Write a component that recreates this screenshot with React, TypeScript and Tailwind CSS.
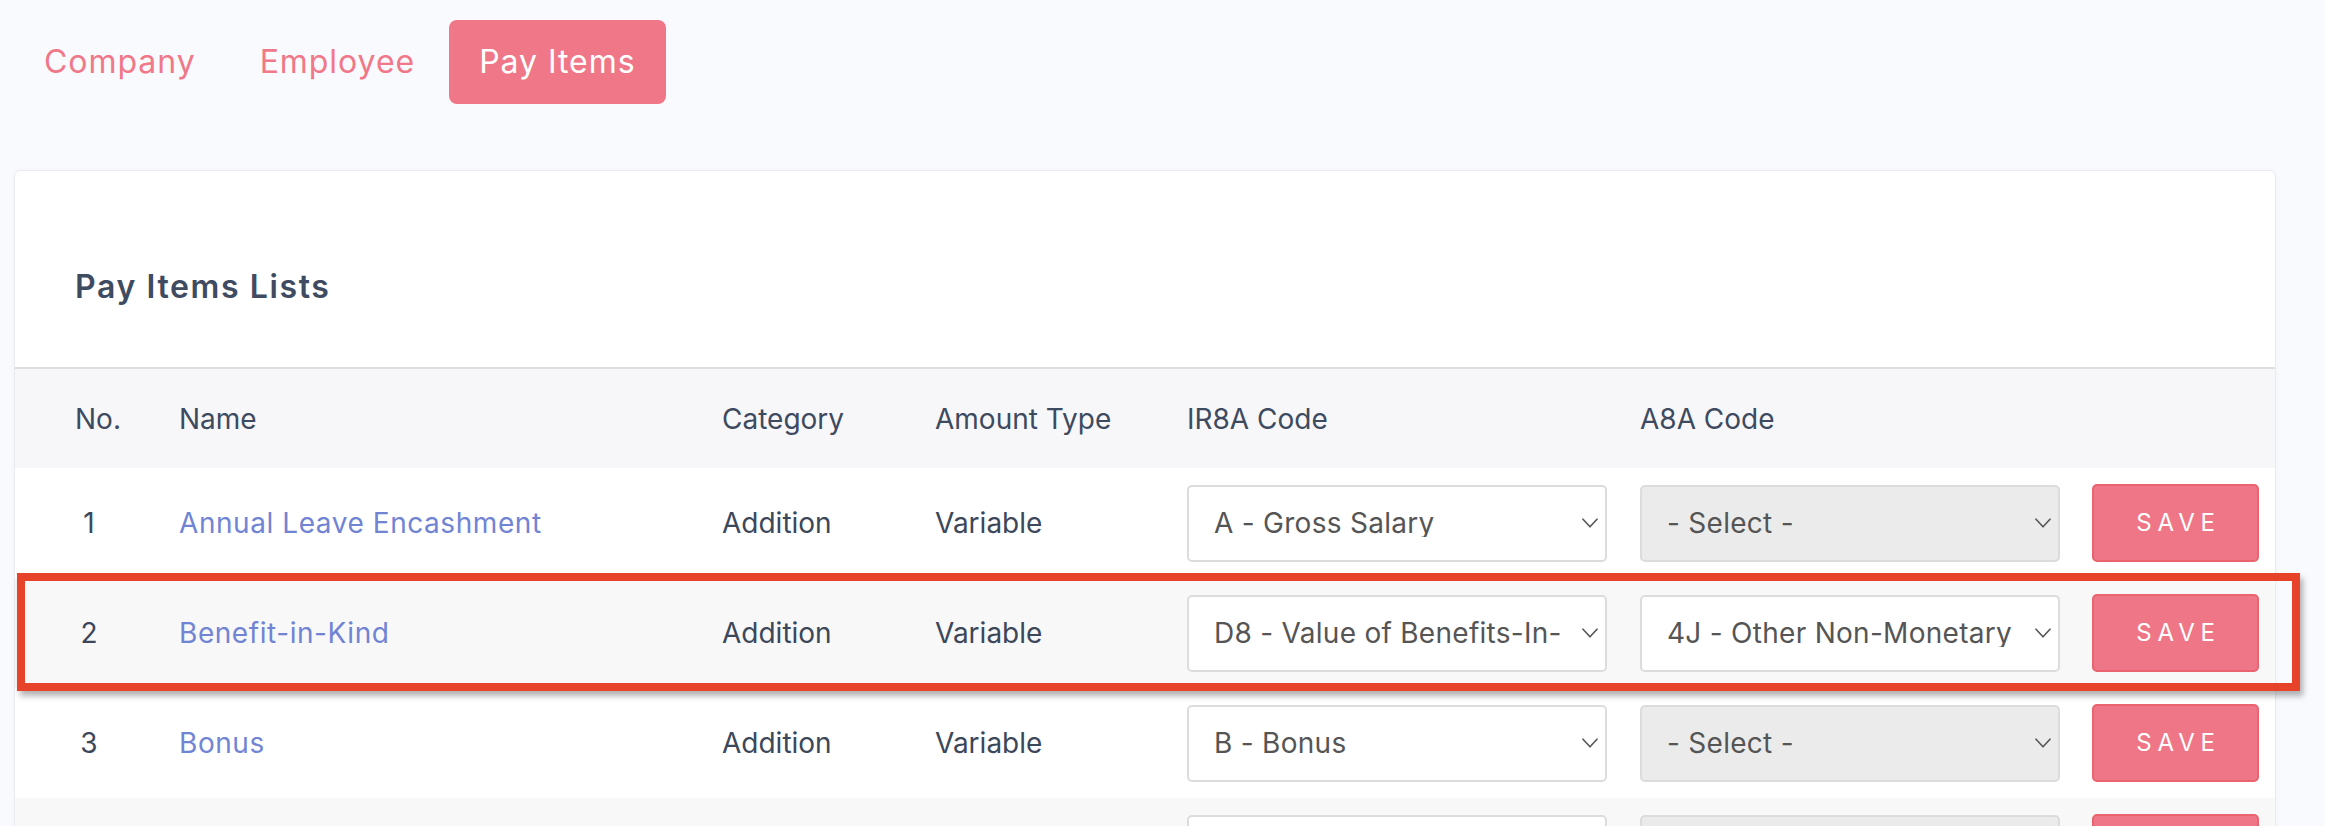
import React from "react";

type Row = {
  no: number;
  name: string;
  cat: string;
  amt: string;
  ir8a: string;
  a8a: string;
  a8aDisabled: boolean;
  striped: boolean;
};

const rows: Row[] = [
  { no: 1, name: "Annual Leave Encashment", cat: "Addition", amt: "Variable", ir8a: "A - Gross Salary", a8a: "- Select -", a8aDisabled: true, striped: false },
  { no: 2, name: "Benefit-in-Kind", cat: "Addition", amt: "Variable", ir8a: "D8 - Value of Benefits-In-Kind", a8a: "4J - Other Non-Monetary Awards", a8aDisabled: false, striped: true },
  { no: 3, name: "Bonus", cat: "Addition", amt: "Variable", ir8a: "B - Bonus", a8a: "- Select -", a8aDisabled: true, striped: false },
  { no: 4, name: "Commission", cat: "Addition", amt: "Variable", ir8a: "A - Gross Salary", a8a: "- Select -", a8aDisabled: true, striped: true },
];

function Chevron() {
  return (
    <svg width="16" height="10" viewBox="0 0 16 10" className="shrink-0">
      <path d="M1 1.2L8 8.8L15 1.2" fill="none" stroke="#555555" strokeWidth="1.6" strokeLinecap="round" strokeLinejoin="round" />
    </svg>
  );
}

function SelectBox({ value, disabled }: { value: string; disabled?: boolean }) {
  return (
    <div
      className={`flex h-[77px] w-[420px] items-center gap-[20px] rounded-[5px] border-2 border-[#dcdcdc] pl-[25px] pr-[7px] ${
        disabled ? "bg-[#ebebeb]" : "bg-white"
      }`}
    >
      <span className="min-w-0 flex-1 overflow-hidden whitespace-nowrap text-[28px] leading-none tracking-[0.01em] text-[#555555]">{value}</span>
      <Chevron />
    </div>
  );
}

const gridCols = "grid grid-cols-[104px_543px_213px_252px_453px_452px_167px] items-center pl-[60px] pr-[16px]";

export default function App() {
  return (
    <div
      className="relative min-h-[826px] overflow-hidden bg-[#f9fafe] pl-[14px] pr-[49px] pt-[20px]"
      style={{ fontFamily: "Inter, 'Open Sans', sans-serif" }}
    >
      {/* Tabs */}
      <div className="flex items-center gap-[4px]">
        <div className="flex h-[84px] items-center px-[30px] text-[32px] tracking-[0.03em] text-[#f07888]">Company</div>
        <div className="flex h-[84px] items-center px-[30px] text-[32px] tracking-[0.03em] text-[#f07888]">Employee</div>
        <div className="flex h-[84px] items-center rounded-[8px] bg-[#f07787] px-[30px] text-[32px] tracking-[0.03em] text-white">Pay Items</div>
      </div>

      {/* Card */}
      <div className="mt-[66px] rounded-[6px] border border-[#eaebf0] bg-white shadow-[0_0_6px_rgba(0,0,0,0.03)]">
        <div className="h-[198px] border-b-2 border-[#dedede] pl-[60px] pt-[98px]">
          <h2 className="text-[32px] font-semibold leading-[36px] tracking-[0.05em] text-[#3e4b61]">Pay Items Lists</h2>
        </div>

        <div className={`${gridCols} h-[99px] bg-[#f7f7f9] text-[28px] text-[#3d4a5f]`}>
          <div>No.</div>
          <div>Name</div>
          <div>Category</div>
          <div>Amount Type</div>
          <div>IR8A Code</div>
          <div>A8A Code</div>
          <div></div>
        </div>

        {rows.map((r) => (
          <div
            key={r.no}
            className={`${gridCols} h-[110px] text-[28px] text-[#3c475a] ${r.striped ? "bg-[#f8f8f8]" : "bg-white"}`}
          >
            <div className="w-[28px] text-center">{r.no}</div>
            <div className="tracking-[0.02em] text-[#7184d4]">{r.name}</div>
            <div>{r.cat}</div>
            <div>{r.amt}</div>
            <div>
              <SelectBox value={r.ir8a} />
            </div>
            <div>
              <SelectBox value={r.a8a} disabled={r.a8aDisabled} />
            </div>
            <div>
              <button className="flex h-[78px] w-[167px] items-center justify-center rounded-[5px] border-2 border-[#e9646f] bg-[#ef7686] pl-[6px] text-[24px] tracking-[0.24em] text-white">
                SAVE
              </button>
            </div>
          </div>
        ))}
      </div>

      {/* Annotation highlight */}
      <div className="pointer-events-none absolute left-[17px] top-[573px] h-[118px] w-[2283px] border-[8px] border-[#e6432a] shadow-[3px_5px_6px_rgba(0,0,0,0.3)]" />
    </div>
  );
}
